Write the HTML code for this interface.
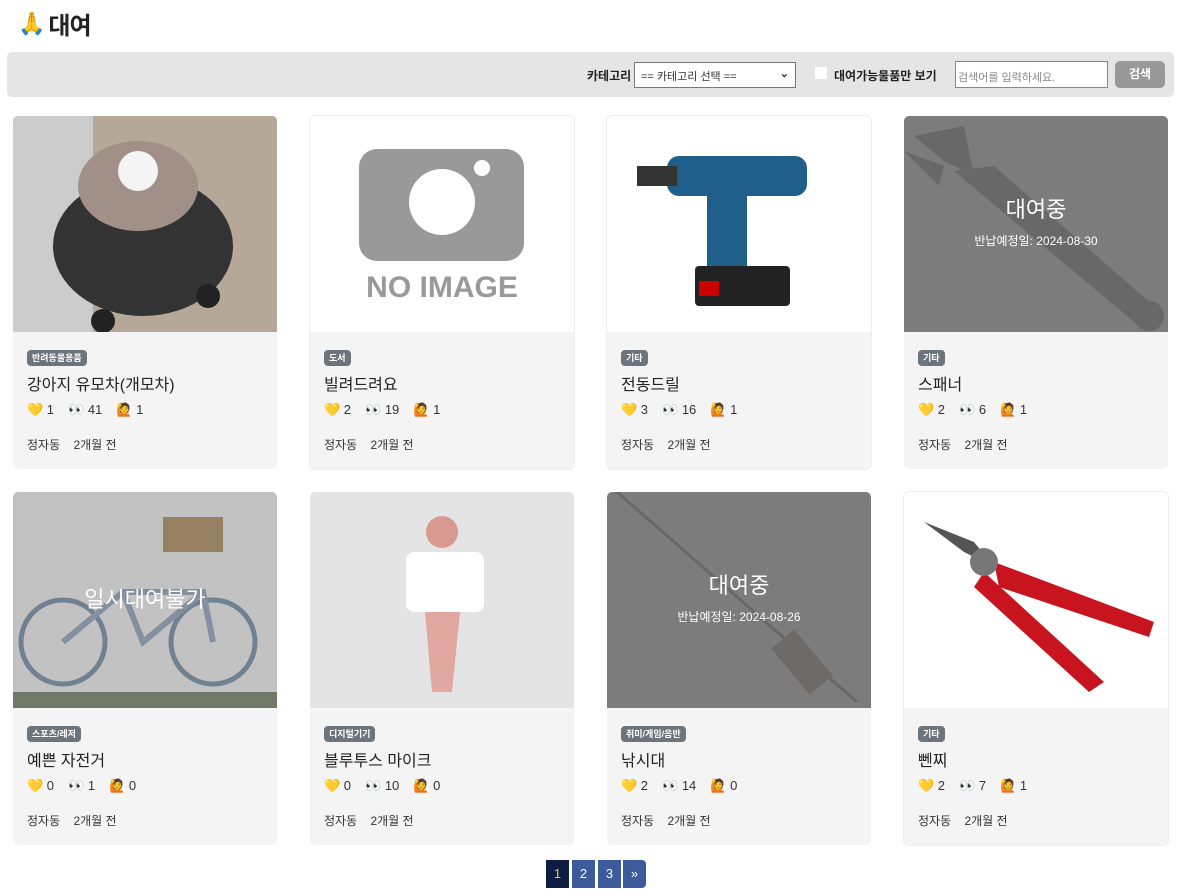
<!DOCTYPE html>
<html><head><meta charset="utf-8">
<style>
*{box-sizing:border-box;margin:0;padding:0}
body{width:1180px;height:889px;background:#fff;font-family:"Liberation Sans","Noto Sans CJK KR",sans-serif;color:#222;position:relative;overflow:hidden}
h1{position:absolute;left:18px;top:6px;font-size:24px;font-weight:bold;color:#222;display:flex;align-items:center;gap:4px;letter-spacing:-1px}
.bar{position:absolute;left:7px;top:52px;width:1167px;height:45px;background:#e5e5e5;border-radius:5px}
.lbl{position:absolute;top:67px;font-size:12px;font-weight:bold;color:#222}
.sel{position:absolute;left:634px;top:62px;width:162px;height:26px;border:1px solid #777;background:#fff;font-size:11px;color:#333;padding:5px 6px}
.sel b{position:absolute;right:6px;top:4px;font-size:11px}
.chk{position:absolute;left:815px;top:67px;width:12px;height:12px;border-radius:2px;background:#fff}
.inp{position:absolute;left:955px;top:61px;width:153px;height:27px;border:1px solid #888;background:#fff;font-size:11px;color:#888;padding:7px 2px}
.btn{position:absolute;left:1115px;top:61px;width:50px;height:27px;background:#999;border-radius:5px;color:#fff;font-size:12px;font-weight:bold;text-align:center;line-height:27px}
.card{position:absolute;width:264px;height:353px;background:#f4f4f4;border-radius:5px;overflow:hidden}
.bd{box-shadow:0 0 0 1px #eee}
.img{position:absolute;left:0;top:0;width:264px;height:216px;overflow:hidden}
.ov{position:absolute;inset:0;background:rgba(110,110,110,.9);color:#fff;text-align:center}
.ov .t{font-size:22px;margin-top:76px}
.ov .d{font-size:12px;margin-top:8px}
.tag{position:absolute;left:14px;top:234px;background:#6c757d;color:#fff;font-size:9px;font-weight:bold;padding:2px 5px;border-radius:4px;line-height:12px}
.nm{position:absolute;left:14px;top:255px;font-size:16px;color:#222}
.st{position:absolute;left:14px;top:286px;font-size:13px;color:#333;word-spacing:0}
.st span{margin-right:14px}
.loc{position:absolute;left:14px;top:320px;font-size:12px;color:#333}
.pg{position:absolute;top:860px;height:28px;width:23px;background:#3d5a9a;color:#fff;font-size:13px;text-align:center;line-height:28px}
</style></head><body>
<h1><span style="font-size:22px">🙏</span>대여</h1>
<div class="bar"></div>
<div class="lbl" style="left:587px">카테고리</div>
<div class="sel">== 카테고리 선택 ==<b>⌄</b></div>
<div class="chk"></div>
<div class="lbl" style="left:834px">대여가능물품만 보기</div>
<div class="inp">검색어를 입력하세요.</div>
<div class="btn">검색</div>

<div class="card" style="left:13px;top:116px">
 <div class="img" style="background:#8a7a6a">
  <svg width="264" height="216"><rect width="264" height="216" fill="#b5a898"/><rect x="0" y="0" width="80" height="216" fill="#ccc"/><ellipse cx="130" cy="130" rx="90" ry="70" fill="#333"/><ellipse cx="125" cy="70" rx="60" ry="45" fill="#a09088"/><circle cx="125" cy="55" r="20" fill="#f4f4f4"/><circle cx="90" cy="205" r="12" fill="#222"/><circle cx="195" cy="180" r="12" fill="#222"/></svg>
 </div>
 <div class="tag">반려동물용품</div><div class="nm">강아지 유모차(개모차)</div>
 <div class="st"><span>💛 1</span><span>👀 41</span><span>🙋 1</span></div><div class="loc">정자동 &nbsp;&nbsp; 2개월 전</div>
</div>
<div class="card bd" style="left:310px;top:116px">
 <div class="img" style="background:#fff">
  <svg width="264" height="216"><rect x="49" y="33" width="165" height="112" rx="18" fill="#999"/><circle cx="132" cy="86" r="33" fill="#fff"/><circle cx="172" cy="52" r="8" fill="#fff"/><text x="132" y="181" text-anchor="middle" font-family="Liberation Sans" font-weight="bold" font-size="30" fill="#999">NO IMAGE</text></svg>
 </div>
 <div class="tag">도서</div><div class="nm">빌려드려요</div>
 <div class="st"><span>💛 2</span><span>👀 19</span><span>🙋 1</span></div><div class="loc">정자동 &nbsp;&nbsp; 2개월 전</div>
</div>
<div class="card bd" style="left:607px;top:116px">
 <div class="img" style="background:#fff">
  <svg width="264" height="216"><rect x="60" y="40" width="140" height="40" rx="12" fill="#1f5f8a"/><rect x="30" y="50" width="40" height="20" fill="#333"/><rect x="100" y="75" width="40" height="80" fill="#1f5f8a"/><rect x="88" y="150" width="95" height="40" rx="4" fill="#222"/><rect x="92" y="165" width="20" height="15" fill="#c00"/></svg>
 </div>
 <div class="tag">기타</div><div class="nm">전동드릴</div>
 <div class="st"><span>💛 3</span><span>👀 16</span><span>🙋 1</span></div><div class="loc">정자동 &nbsp;&nbsp; 2개월 전</div>
</div>
<div class="card" style="left:904px;top:116px">
 <div class="img" style="background:#fff">
  <svg width="264" height="216"><path d="M10 20 L60 10 L70 60 L40 45 Z M0 35 L40 50 L35 70 Z" fill="#333"/><path d="M50 55 L90 50 L250 190 L235 210 Z" fill="#333"/><circle cx="245" cy="200" r="15" fill="#333"/></svg>
  <div class="ov"><div class="t">대여중</div><div class="d">반납예정일: 2024-08-30</div></div>
 </div>
 <div class="tag">기타</div><div class="nm">스패너</div>
 <div class="st"><span>💛 2</span><span>👀 6</span><span>🙋 1</span></div><div class="loc">정자동 &nbsp;&nbsp; 2개월 전</div>
</div>

<div class="card" style="left:13px;top:492px">
 <div class="img" style="background:#fff">
  <svg width="264" height="216"><circle cx="50" cy="150" r="42" fill="none" stroke="#6a8aa8" stroke-width="5"/><circle cx="200" cy="150" r="42" fill="none" stroke="#6a8aa8" stroke-width="5"/><path d="M50 150 L110 100 L190 100 L200 150 M110 100 L130 150 L190 100" stroke="#8aa4c0" stroke-width="6" fill="none"/><rect x="150" y="25" width="60" height="35" fill="#b08a50"/><rect x="0" y="200" width="264" height="16" fill="#6a7a5a"/></svg>
  <div class="ov" style="background:rgba(120,120,120,.45)"><div class="t" style="margin-top:90px">일시대여불가</div></div>
 </div>
 <div class="tag">스포츠/레저</div><div class="nm">예쁜 자전거</div>
 <div class="st"><span>💛 0</span><span>👀 1</span><span>🙋 0</span></div><div class="loc">정자동 &nbsp;&nbsp; 2개월 전</div>
</div>
<div class="card" style="left:310px;top:492px">
 <div class="img" style="background:#e4e4e4">
  <svg width="264" height="216"><circle cx="132" cy="40" r="16" fill="#d89a90"/><rect x="96" y="60" width="78" height="60" rx="8" fill="#fff"/><path d="M115 120 L150 120 L142 200 L122 200 Z" fill="#e0a8a0"/></svg>
 </div>
 <div class="tag">디지털기기</div><div class="nm">블루투스 마이크</div>
 <div class="st"><span>💛 0</span><span>👀 10</span><span>🙋 0</span></div><div class="loc">정자동 &nbsp;&nbsp; 2개월 전</div>
</div>
<div class="card" style="left:607px;top:492px">
 <div class="img" style="background:#fff">
  <svg width="264" height="216"><path d="M10 0 L250 210" stroke="#333" stroke-width="3"/><rect x="180" y="140" width="30" height="60" fill="#6a4a2a" transform="rotate(-40 195 170)"/></svg>
  <div class="ov"><div class="t">대여중</div><div class="d">반납예정일: 2024-08-26</div></div>
 </div>
 <div class="tag">취미/게임/음반</div><div class="nm">낚시대</div>
 <div class="st"><span>💛 2</span><span>👀 14</span><span>🙋 0</span></div><div class="loc">정자동 &nbsp;&nbsp; 2개월 전</div>
</div>
<div class="card bd" style="left:904px;top:492px">
 <div class="img" style="background:#fff">
  <svg width="264" height="216"><path d="M20 30 L70 50 L90 75 L60 60 Z" fill="#555"/><path d="M90 70 L250 130 L245 145 L95 95 Z" fill="#c8141e"/><path d="M80 80 L200 190 L185 200 L70 95 Z" fill="#c8141e"/><circle cx="80" cy="70" r="14" fill="#777"/></svg>
 </div>
 <div class="tag">기타</div><div class="nm">뻰찌</div>
 <div class="st"><span>💛 2</span><span>👀 7</span><span>🙋 1</span></div><div class="loc">정자동 &nbsp;&nbsp; 2개월 전</div>
</div>

<div class="pg" style="left:546px;background:#0c1c42;color:#f0c060">1</div>
<div class="pg" style="left:572px">2</div>
<div class="pg" style="left:598px">3</div>
<div class="pg" style="left:623px;border-radius:0 4px 4px 0">»</div>
</body></html>
